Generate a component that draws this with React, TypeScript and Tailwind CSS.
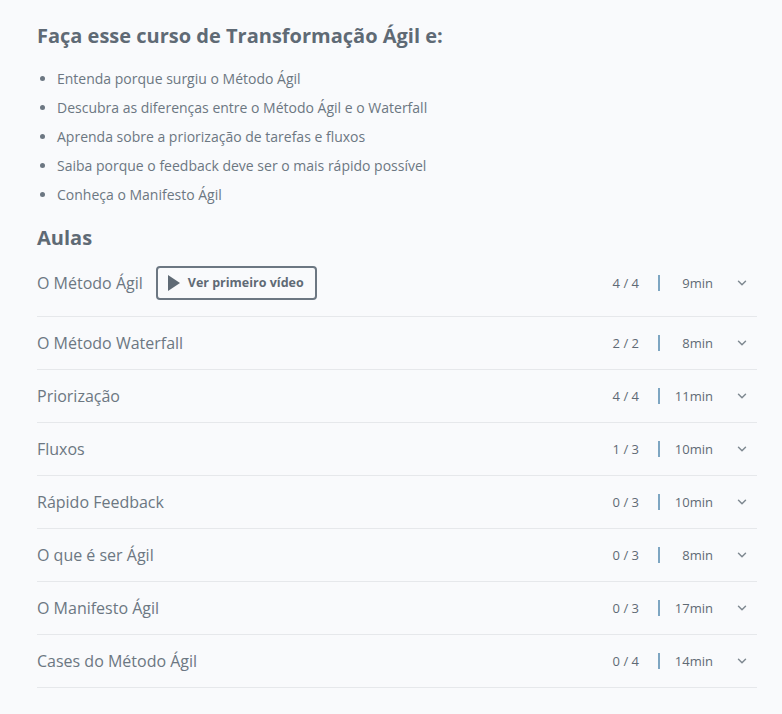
import { ChevronDown } from 'lucide-react';

const objetivos = [
    'Entenda porque surgiu o Método Ágil',
    'Descubra as diferenças entre o Método Ágil e o Waterfall',
    'Aprenda sobre a priorização de tarefas e fluxos',
    'Saiba porque o feedback deve ser o mais rápido possível',
    'Conheça o Manifesto Ágil',
];

const aulas = [
    { title: 'O Método Ágil', done: 4, total: 4, duration: '9min', first: true },
    { title: 'O Método Waterfall', done: 2, total: 2, duration: '8min' },
    { title: 'Priorização', done: 4, total: 4, duration: '11min' },
    { title: 'Fluxos', done: 1, total: 3, duration: '10min' },
    { title: 'Rápido Feedback', done: 0, total: 3, duration: '10min' },
    { title: 'O que é ser Ágil', done: 0, total: 3, duration: '8min' },
    { title: 'O Manifesto Ágil', done: 0, total: 3, duration: '17min' },
    { title: 'Cases do Método Ágil', done: 0, total: 4, duration: '14min' },
];

export default function App() {
    return (
        <div className="min-h-screen bg-[#f9fafc] pl-[37px] pr-[25px] pt-[22px] pb-[26px] font-['Open_Sans',sans-serif] text-[#6c7782]">
            <h1 className="text-[20px] leading-[28px] font-bold text-[#5f6a75]">
                Faça esse curso de Transformação Ágil e:
            </h1>

            <ul className="mt-[14px] pl-[20px] list-disc marker:text-[#6c7782]">
                {objetivos.map((item) => (
                    <li key={item} className="text-[14px] leading-[29px]">
                        {item}
                    </li>
                ))}
            </ul>

            <h2 className="mt-[15px] text-[20px] leading-[28px] font-bold text-[#5f6a75]">Aulas</h2>

            <div>
                {aulas.map((aula) => (
                    <div
                        key={aula.title}
                        className={
                            aula.first
                                ? 'flex items-center justify-between border-b border-[#e6e8eb] pt-[14px] pb-[16px]'
                                : 'flex h-[53px] items-center justify-between border-b border-[#e6e8eb]'
                        }
                    >
                        <div className="flex items-center">
                            <span className="text-[16px] leading-[24px] text-[#6c7782]">{aula.title}</span>
                            {aula.first && (
                                <button className="ml-[13px] flex h-[34px] items-center rounded-[4px] border-2 border-[#6c7782] pl-[10px] pr-[11px] text-[12.5px] font-bold text-[#5f6a75]">
                                    <svg width="12" height="16" viewBox="0 0 12 16" className="mr-[8px]">
                                        <path d="M0 0 L12 8 L0 16 Z" fill="#5f6a75" />
                                    </svg>
                                    Ver primeiro vídeo
                                </button>
                            )}
                        </div>

                        <div className="flex items-center text-[13px] leading-[20px] text-[#5f6a75]">
                            <span className="w-[44px] text-right">
                                {aula.done} / {aula.total}
                            </span>
                            <span className="ml-[19px] h-[16px] w-[2px] bg-[#7ea6c2]" />
                            <span className="ml-[1px] w-[52px] text-right">{aula.duration}</span>
                            <ChevronDown className="ml-[22px] mr-[8px] h-[14px] w-[14px] text-[#7f8991]" strokeWidth={2.5} />
                        </div>
                    </div>
                ))}
            </div>
        </div>
    );
}
